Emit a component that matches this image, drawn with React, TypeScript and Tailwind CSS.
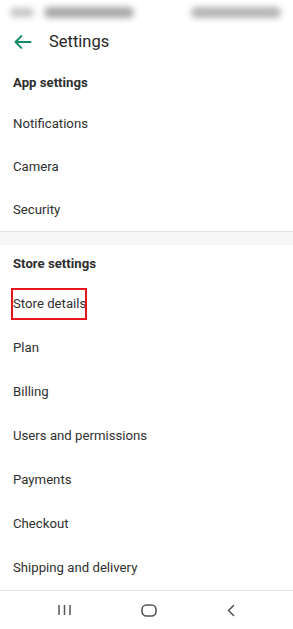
import React from "react";

const font = { fontFamily: "Roboto, 'Noto Sans', sans-serif" };

function Row({ label, boxed }: { label: string; boxed?: boolean }) {
  return (
    <div className="h-[44px] flex items-center px-[13px] text-[13.2px] text-[#303030]">
      {boxed ? (
        <span className="relative">
          {label}
          <span className="absolute -left-[2px] -right-[1px] top-[-6px] bottom-[-6px] border-2 border-[#e8141b]" />
        </span>
      ) : (
        label
      )}
    </div>
  );
}

export default function App() {
  return (
    <div className="w-[293px] h-[629px] bg-white flex flex-col overflow-hidden" style={font}>
      {/* status bar */}
      <div className="h-[24px] flex items-center justify-between px-[10px]">
        <div className="flex gap-[10px] items-center blur-[3px]">
          <span className="bg-[#c4c4c4] w-[24px] h-[9px] rounded-full" />
          <span className="bg-[#a8a8a8] w-[90px] h-[11px] rounded-full" />
        </div>
        <div className="blur-[3px] pr-[2px]">
          <span className="block bg-[#b4b4b4] w-[90px] h-[11px] rounded-full" />
        </div>
      </div>
      {/* header */}
      <div className="h-[36px] flex items-center">
        <div className="w-[49px] flex items-center pl-[13px]">
          <svg width="20" height="20" viewBox="0 0 24 24" fill="none" stroke="#138a66" strokeWidth="2.4" strokeLinecap="round" strokeLinejoin="round">
            <path d="M21 12H4" />
            <path d="M10 5l-7 7 7 7" />
          </svg>
        </div>
        <span className="text-[16.5px] text-[#262626]">Settings</span>
      </div>
      {/* App settings */}
      <div className="h-[42px] pt-[4px] flex items-center px-[13px] text-[13.2px] font-bold text-[#2e2e2e]">
        App settings
      </div>
      <div className="h-[43px] flex items-center px-[13px] text-[13.2px] text-[#303030]">Notifications</div>
      <div className="h-[43px] flex items-center px-[13px] text-[13.2px] text-[#303030]">Camera</div>
      <div className="h-[43px] flex items-center px-[13px] text-[13.2px] text-[#303030]">Security</div>
      <div className="h-[14px] bg-[#f6f6f6] border-t border-[#e2e2e2]" />
      {/* Store settings */}
      <div className="h-[37px] flex items-center px-[13px] text-[13.2px] font-bold text-[#2e2e2e]">
        Store settings
      </div>
      <Row label="Store details" boxed />
      <Row label="Plan" />
      <Row label="Billing" />
      <Row label="Users and permissions" />
      <Row label="Payments" />
      <Row label="Checkout" />
      <Row label="Shipping and delivery" />
      {/* nav bar */}
      <div className="flex-1 border-t border-[#e6e6e6] flex items-center pl-[57px] gap-[69px]">
        <svg width="15" height="12" viewBox="0 0 15 12" fill="none" stroke="#555" strokeWidth="1.5">
          <path d="M2 1v10M7.5 1v10M13 1v10" />
        </svg>
        <svg width="16" height="13" viewBox="0 0 16 13" fill="none" stroke="#555" strokeWidth="1.6">
          <rect x="1" y="1" width="14" height="11" rx="4.5" />
        </svg>
        <svg width="10" height="13" viewBox="0 0 10 13" fill="none" stroke="#555" strokeWidth="1.6" strokeLinecap="round" strokeLinejoin="round">
          <path d="M7.5 1.5L2.5 6.5l5 5" />
        </svg>
      </div>
    </div>
  );
}
